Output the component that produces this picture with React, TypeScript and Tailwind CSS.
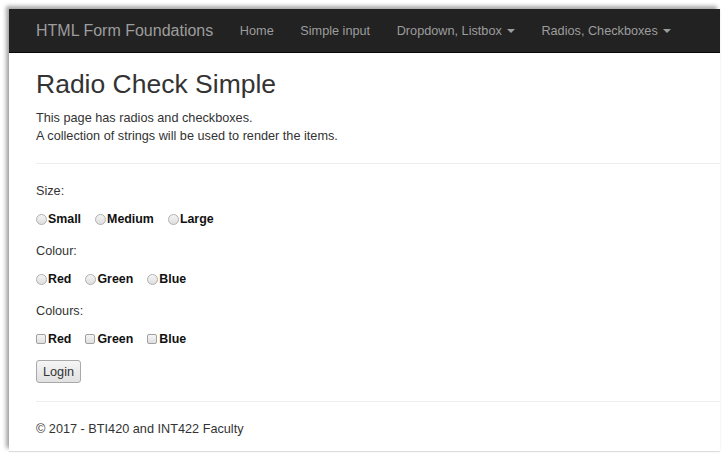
import React from 'react';

const navLinks = [
  { label: 'Home', caret: false },
  { label: 'Simple input', caret: false },
  { label: 'Dropdown, Listbox', caret: true },
  { label: 'Radios, Checkboxes', caret: true },
];

const Radio: React.FC<{ label: string }> = ({ label }) => (
  <label className="flex items-center">
    <span className="w-[11px] h-[11px] rounded-full border border-[#b0b0b0] bg-gradient-to-b from-[#f4f4f4] to-[#dedede]" />
    <span className="ml-[1px] text-[12.4px] font-bold text-[#111]">{label}</span>
  </label>
);

const Checkbox: React.FC<{ label: string }> = ({ label }) => (
  <label className="flex items-center">
    <span className="w-[10px] h-[10px] rounded-[2px] border border-[#a0a0a0] bg-gradient-to-b from-[#f5f5f5] to-[#dfdfdf]" />
    <span className="ml-[2px] text-[12.4px] font-bold text-[#111]">{label}</span>
  </label>
);

const App: React.FC = () => {
  return (
    <div className="w-[723px] h-[457px] bg-white overflow-hidden font-['Liberation_Sans',Arial,sans-serif] text-[12.7px] leading-[18px] text-[#333]">
      {/* screenshot window with its shadow */}
      <div className="ml-[9px] mt-[9px] w-[711px] h-[442px] bg-white overflow-hidden shadow-[-3px_-3px_4px_rgba(0,0,0,0.35),0_1px_1px_rgba(0,0,0,0.12)]">
        <nav className="h-[44px] bg-[#222] border-b border-[#080808] flex items-center pl-[27px]">
          <span className="text-[16px] text-[#9d9d9d] pr-[13.3px]">HTML Form Foundations</span>
          {navLinks.map((l) => (
            <span key={l.label} className="px-[13.3px] text-[#9d9d9d] flex items-center">
              {l.label}
              {l.caret && (
                <span className="ml-[5px] w-0 h-0 border-x-[4px] border-x-transparent border-t-[4px] border-t-[#9d9d9d]" />
              )}
            </span>
          ))}
        </nav>

        <div className="pl-[27px]">
          <h2 className="mt-[17px] text-[26.5px] leading-[29px] text-[#333]">Radio Check Simple</h2>
          <p className="mt-[10px]">
            This page has radios and checkboxes.
            <br />
            A collection of strings will be used to render the items.
          </p>
          <hr className="mt-[18px] border-t border-[#eee]" />

          <div className="mt-[18px]">Size:</div>
          <div className="mt-[10px] flex gap-[14px]">
            <Radio label="Small" />
            <Radio label="Medium" />
            <Radio label="Large" />
          </div>

          <div className="mt-[14px]">Colour:</div>
          <div className="mt-[10px] flex gap-[14px]">
            <Radio label="Red" />
            <Radio label="Green" />
            <Radio label="Blue" />
          </div>

          <div className="mt-[14px]">Colours:</div>
          <div className="mt-[10px] flex gap-[14px]">
            <Checkbox label="Red" />
            <Checkbox label="Green" />
            <Checkbox label="Blue" />
          </div>

          <button className="mt-[12px] w-[45px] h-[23px] rounded-[3px] border border-[#a9a9a9] bg-gradient-to-b from-[#f5f5f5] to-[#e1e1e1] text-[#333]">
            Login
          </button>

          <hr className="mt-[18px] border-t border-[#eee]" />
          <footer className="mt-[18px]">© 2017 - BTI420 and INT422 Faculty</footer>
        </div>
      </div>
    </div>
  );
};

export default App;
